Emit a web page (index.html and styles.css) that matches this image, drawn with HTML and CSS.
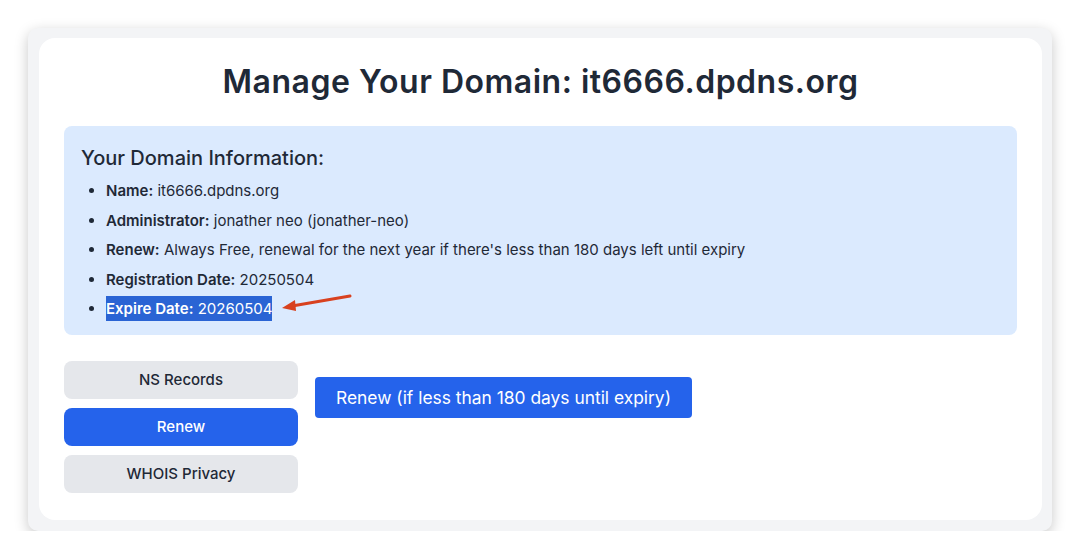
FILE: index.html
```html
<!DOCTYPE html>
<html lang="en">
<head>
  <meta charset="UTF-8">
  <title>Manage Your Domain</title>
  <link rel="stylesheet" href="styles.css">
</head>
<body>
  <div class="frame">
    <div class="card">
      <h1>Manage Your Domain: it6666.dpdns.org</h1>

      <div class="info">
        <h3>Your Domain Information:</h3>
        <ul>
          <li><b>Name:</b> it6666.dpdns.org</li>
          <li><b>Administrator:</b> jonather neo (jonather-neo)</li>
          <li><b>Renew:</b> Always Free, renewal for the next year if there's less than 180 days left until expiry</li>
          <li><b>Registration Date:</b> 20250504</li>
          <li class="marked"><span class="sel"><b>Expire Date:</b> 20260504</span>
            <svg class="arrow" width="80" height="24" viewBox="0 0 80 24">
              <path d="M72 4 L14 14" stroke="#d8411f" stroke-width="3" stroke-linecap="round" fill="none"/>
              <path d="M4 16 L17 8 L18 19 Z" fill="#d8411f"/>
            </svg>
          </li>
        </ul>
      </div>

      <div class="actions">
        <div class="tabs">
          <button class="tab">NS Records</button>
          <button class="tab active">Renew</button>
          <button class="tab">WHOIS Privacy</button>
        </div>
        <div class="panel">
          <button class="renew-btn">Renew (if less than 180 days until expiry)</button>
        </div>
      </div>
    </div>
  </div>
</body>
</html>
```

FILE: styles.css
```css
body {
  margin: 0;
  background-color: #fff;
  font-family: Inter, "Liberation Sans", sans-serif;
  color: #1f2937;
}
.frame {
  margin: 28px 0 0 28px;
  width: 1024px;
  height: 503px;
  box-sizing: border-box;
  padding: 10px 10px 11px 11px;
  background-color: #f3f4f6;
  border-radius: 10px;
  box-shadow: 0 4px 14px rgba(0, 0, 0, 0.22);
}
.card {
  height: 100%;
  box-sizing: border-box;
  padding: 22px 25px 0 25px;
  background-color: #fff;
  border-radius: 16px;
}
h1 {
  margin: 0 0 22px 0;
  font-size: 32px;
  line-height: 44px;
  font-weight: 600;
  letter-spacing: 0.5px;
  text-align: center;
  color: #1f2937;
}
.info {
  background-color: #dbeafe;
  border-radius: 8px;
  padding: 18px 17px 11px 17px;
}
.info h3 {
  margin: 0 0 4px 0;
  font-size: 20px;
  line-height: 28px;
  font-weight: 500;
}
.info ul {
  margin: 0;
  padding-left: 25px;
}
.info li {
  font-size: 15px;
  line-height: 29.5px;
}
.info li b {
  font-weight: 600;
}
.marked {
  position: relative;
}
.sel {
  background-color: #2a64d4;
  color: #fff;
  padding: 3px 0;
}
.arrow {
  position: absolute;
  left: 172px;
  top: -2px;
}
.actions {
  display: flex;
  gap: 17px;
  margin-top: 26px;
}
.tabs {
  display: flex;
  flex-direction: column;
  gap: 9px;
  width: 234px;
}
button {
  font-family: inherit;
  border: none;
  cursor: pointer;
}
.tab {
  height: 38px;
  background-color: #e5e7eb;
  color: #1f2937;
  border-radius: 8px;
  font-size: 15px;
  font-weight: 500;
}
.tab.active {
  background-color: #2563eb;
  color: #fff;
}
.panel {
  padding-top: 16px;
}
.renew-btn {
  height: 41px;
  padding: 0 21px;
  background-color: #2563eb;
  color: #fff;
  border-radius: 4px;
  font-size: 17.4px;
}
```
